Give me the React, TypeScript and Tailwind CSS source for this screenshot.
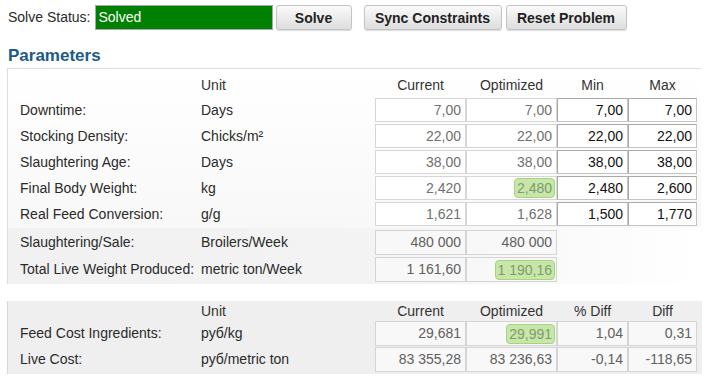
import React from "react";

type Kind = "ro" | "ro2" | "in";

type CellProps = {
  value: string;
  width: string;
  kind: Kind;
  hl?: boolean;
  height?: string;
};

function Cell({ value, width, kind, hl, height = "h-[24px]" }: CellProps) {
  const base =
    kind === "in"
      ? "bg-white border-[#c4c4c4] border-t-[#a9a9a9] border-l-[#a9a9a9] text-[#111]"
      : kind === "ro2"
      ? "bg-[#f8f8f8] border-[#d4d4d4] text-[#606060]"
      : "bg-white border-[#d6d6d6] text-[#707070]";
  return (
    <div className={`${width} ${height} ${base} border flex items-center justify-end px-px shrink-0`}>
      {hl ? (
        <span className="h-[20px] leading-[18px] px-[2px] border border-[#a3d47e] bg-[#c8e6a8] rounded-[4px] text-[#7d9c70]">
          {value}
        </span>
      ) : (
        <span className="px-[3px]">{value}</span>
      )}
    </div>
  );
}

const W = {
  label: "w-[193px]",
  unit: "w-[174px]",
  cur: "w-[91px]",
  opt: "w-[91px]",
  min: "w-[71px]",
  max: "w-[69px]",
};

const params = [
  { label: "Downtime:", unit: "Days", cur: "7,00", opt: "7,00", min: "7,00", max: "7,00" },
  { label: "Stocking Density:", unit: "Chicks/m²", cur: "22,00", opt: "22,00", min: "22,00", max: "22,00" },
  { label: "Slaughtering Age:", unit: "Days", cur: "38,00", opt: "38,00", min: "38,00", max: "38,00" },
  { label: "Final Body Weight:", unit: "kg", cur: "2,420", opt: "2,480", min: "2,480", max: "2,600", hl: true },
  { label: "Real Feed Conversion:", unit: "g/g", cur: "1,621", opt: "1,628", min: "1,500", max: "1,770" },
];

const results = [
  { label: "Slaughtering/Sale:", unit: "Broilers/Week", cur: "480 000", opt: "480 000" },
  { label: "Total Live Weight Produced:", unit: "metric ton/Week", cur: "1 161,60", opt: "1 190,16", hl: true },
];

const costs = [
  { label: "Feed Cost Ingredients:", unit: "руб/kg", cur: "29,681", opt: "29,991", pct: "1,04", diff: "0,31", hl: true },
  { label: "Live Cost:", unit: "руб/metric ton", cur: "83 355,28", opt: "83 236,63", pct: "-0,14", diff: "-118,65" },
];

function Btn({ children, width }: { children: React.ReactNode; width: string }) {
  return (
    <button
      className={`${width} h-[25px] rounded-[3px] border border-[#c4c4c4] bg-gradient-to-b from-[#fafafa] to-[#dedede] font-bold text-[#222] text-[14px] leading-none shadow-[0_1px_1px_rgba(0,0,0,0.15)]`}
    >
      {children}
    </button>
  );
}

export default function App() {
  return (
    <div className="w-[707px] h-[381px] bg-white text-[14px] text-[#2a2a2a] font-['Liberation_Sans',Arial,sans-serif] overflow-hidden">
      {/* toolbar */}
      <div className="flex items-center pt-[5px] pl-[8px] h-[30px]">
        <span className="mr-[4px]">Solve Status:</span>
        <div className="w-[178px] h-[25px] bg-[#008000] border border-[#a8a8a8] text-white flex items-center pl-[3px]">
          Solved
        </div>
        <div className="ml-[3px]">
          <Btn width="w-[76px]">Solve</Btn>
        </div>
        <div className="ml-[12px]">
          <Btn width="w-[138px]">Sync Constraints</Btn>
        </div>
        <div className="ml-[4px]">
          <Btn width="w-[121px]">Reset Problem</Btn>
        </div>
      </div>

      <h2 className="mt-[16px] ml-[8px] h-[20px] leading-[20px] text-[17px] font-bold text-[#1b5b86]">Parameters</h2>

      {/* parameters panel */}
      <div className="mt-[2px] ml-[7px] w-[694px] border-l border-t border-[#dcdcdc]">
        <div className="bg-gradient-to-b from-white to-[#f8f8f8]">
          <div className="flex h-[29px] items-end pb-[2px] text-[#333]">
            <div className={W.label} />
            <div className={W.unit}>Unit</div>
            <div className={`${W.cur} text-center`}>Current</div>
            <div className={`${W.opt} text-center`}>Optimized</div>
            <div className={`${W.min} text-center`}>Min</div>
            <div className={`${W.max} text-center`}>Max</div>
          </div>
          <div className="flex flex-col gap-[2px] pb-[2px]">
            {params.map((r) => (
              <div key={r.label} className="flex items-center h-[24px]">
                <div className={`${W.label} pl-[12px] shrink-0`}>{r.label}</div>
                <div className={`${W.unit} shrink-0`}>{r.unit}</div>
                <Cell value={r.cur} width={W.cur} kind="ro" />
                <Cell value={r.opt} width={W.opt} kind="ro" hl={r.hl} />
                <Cell value={r.min} width={W.min} kind="in" />
                <Cell value={r.max} width={W.max} kind="in" />
              </div>
            ))}
          </div>
        </div>
        <div className="bg-gradient-to-r from-[#f1f1f1] via-[#f3f3f3] to-white flex flex-col gap-[2px] pt-[2px] pb-[2px]">
          {results.map((r) => (
            <div key={r.label} className="flex items-center h-[25px]">
              <div className={`${W.label} pl-[12px] shrink-0`}>{r.label}</div>
              <div className={`${W.unit} shrink-0`}>{r.unit}</div>
              <Cell value={r.cur} width={W.cur} kind="ro2" height="h-[25px]" />
              <Cell value={r.opt} width={W.opt} kind="ro2" hl={r.hl} height="h-[25px]" />
            </div>
          ))}
        </div>
      </div>

      {/* cost panel */}
      <div className="mt-[17px] ml-[7px] w-[695px] border-l border-[#d8d8d8] bg-[#efefef]">
        <div className="flex h-[20px] items-center text-[#333]">
          <div className={W.label} />
          <div className={W.unit}>Unit</div>
          <div className={`${W.cur} text-center`}>Current</div>
          <div className={`${W.opt} text-center`}>Optimized</div>
          <div className={`${W.min} text-center`}>% Diff</div>
          <div className={`${W.max} text-center`}>Diff</div>
        </div>
        <div className="flex flex-col gap-px pb-[2px]">
          {costs.map((r) => (
            <div key={r.label} className="flex items-center h-[25px]">
              <div className={`${W.label} pl-[12px] shrink-0`}>{r.label}</div>
              <div className={`${W.unit} shrink-0`}>{r.unit}</div>
              <Cell value={r.cur} width={W.cur} kind="ro2" height="h-[25px]" />
              <Cell value={r.opt} width={W.opt} kind="ro2" hl={r.hl} height="h-[25px]" />
              <Cell value={r.pct} width={W.min} kind="ro2" height="h-[25px]" />
              <Cell value={r.diff} width={W.max} kind="ro2" height="h-[25px]" />
            </div>
          ))}
        </div>
      </div>
    </div>
  );
}
